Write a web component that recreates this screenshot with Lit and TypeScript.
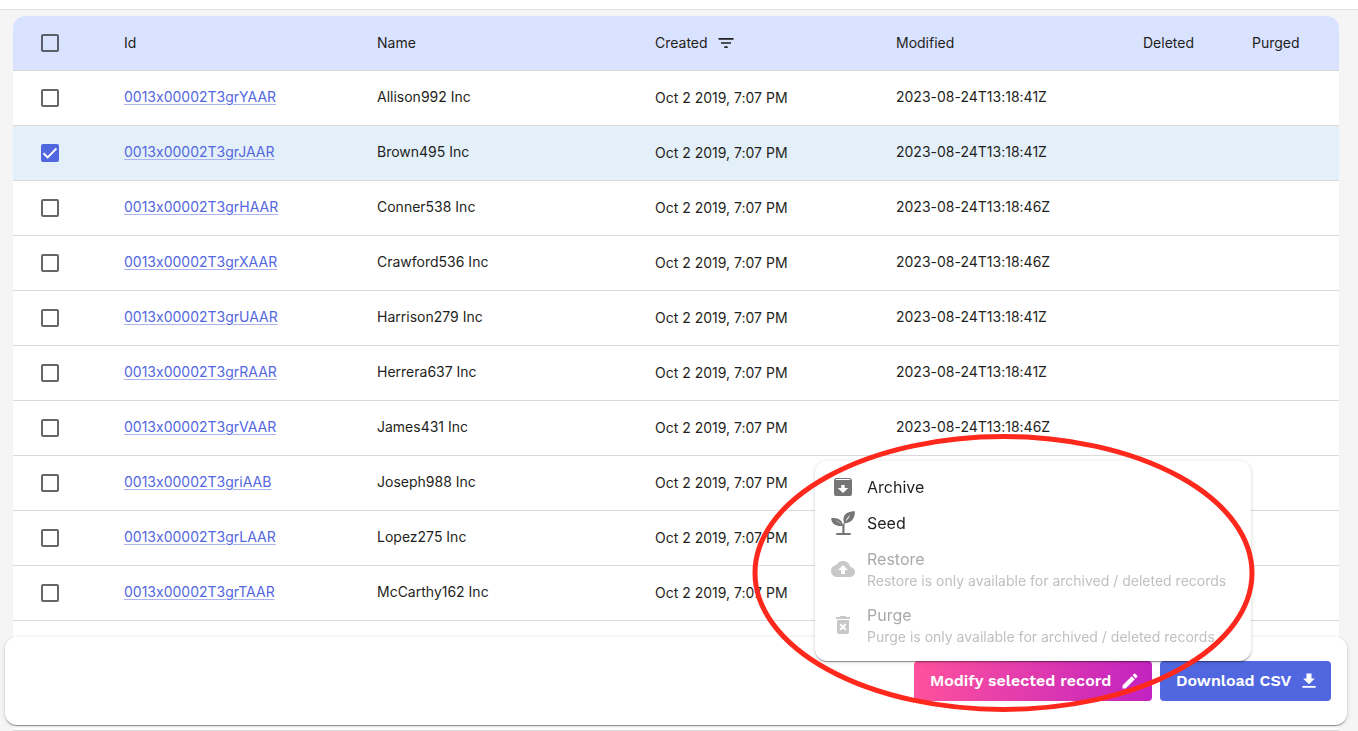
import { LitElement, html, svg, css } from "lit";
import { customElement, state } from "lit/decorators.js";

interface Account {
  id: string;
  name: string;
  created: string;
  modified: string;
}

const CREATED = "Oct 2 2019, 7:07 PM";

const ACCOUNTS: Account[] = [
  { id: "0013x00002T3grYAAR", name: "Allison992 Inc", created: CREATED, modified: "2023-08-24T13:18:41Z" },
  { id: "0013x00002T3grJAAR", name: "Brown495 Inc", created: CREATED, modified: "2023-08-24T13:18:41Z" },
  { id: "0013x00002T3grHAAR", name: "Conner538 Inc", created: CREATED, modified: "2023-08-24T13:18:46Z" },
  { id: "0013x00002T3grXAAR", name: "Crawford536 Inc", created: CREATED, modified: "2023-08-24T13:18:46Z" },
  { id: "0013x00002T3grUAAR", name: "Harrison279 Inc", created: CREATED, modified: "2023-08-24T13:18:41Z" },
  { id: "0013x00002T3grRAAR", name: "Herrera637 Inc", created: CREATED, modified: "2023-08-24T13:18:41Z" },
  { id: "0013x00002T3grVAAR", name: "James431 Inc", created: CREATED, modified: "2023-08-24T13:18:46Z" },
  { id: "0013x00002T3griAAB", name: "Joseph988 Inc", created: CREATED, modified: "" },
  { id: "0013x00002T3grLAAR", name: "Lopez275 Inc", created: CREATED, modified: "" },
  { id: "0013x00002T3grTAAR", name: "McCarthy162 Inc", created: CREATED, modified: "" },
];

const icon = (shape: unknown) =>
  html`<svg class="icon" viewBox="0 0 24 24" fill="currentColor" aria-hidden="true">${shape}</svg>`;

const ICONS = {
  archive: svg`<path fill-rule="evenodd" d="M5.2 3h13.6c.5 0 .9.2 1.2.6l.7.9c.2.3.3.6.3 1V19a2 2 0 0 1-2 2H5a2 2 0 0 1-2-2V5.500c0-.4.1-.7.3-1l.7-.9c.3-.4.700-.6 1.200-.6zM5.100 4.100 4.500 5h15l-.6-.9zM10.300 10v3H6.700l5.300 5 5.300-5h-3.600v-3z"/>`,
  seed: svg`
    <path fill-rule="evenodd" d="M.1 7.200C4 6.600 8.300 7.500 10.200 10c1 1.300 1.500 3 1.300 4.900C6 15.600.4 13.200.1 7.200zM4.300 9.400c2.400.8 4.700 2.400 6.300 4.600C9.400 11.500 7.200 9.800 4.300 9.400z"/>
    <path fill-rule="evenodd" d="M23.900.2C18.500.100 13.400 2 12.500 7.200c-.3 1.800.1 3.600 1 5C20 11.900 24.200 7.600 23.900.2zM19.300 4.300c-2.300 1.600-4 3.700-4.900 6.300 1.900-1.500 3.600-3.700 4.900-6.300z"/>
    <path d="M11.300 23V14.600c-.4-1.600-1.200-2.700-2.400-3.600 1.700.7 2.800 1.600 3.400 2.800.3-2 1.100-3.700 2.500-5-.8 1.900-1.300 3.700-1.300 5.600V23z"/>
    <rect x="5" y="22" width="15" height="2" rx="1"/>`,
  restore: svg`<path d="M19.350 10.040C18.670 6.590 15.640 4 12 4 9.110 4 6.600 5.640 5.350 8.040 2.340 8.360 0 10.910 0 14c0 3.310 2.690 6 6 6h13c2.760 0 5-2.240 5-5 0-2.640-2.050-4.780-4.650-4.960zM14 13v4h-4v-4H7l5-5 5 5h-3z"/>`,
  purge: svg`<path d="M6 19c0 1.100.9 2 2 2h8c1.100 0 2-.9 2-2V7H6v12zm2.460-7.120 1.410-1.410L12 12.590l2.120-2.120 1.410 1.410L13.410 14l2.120 2.120-1.410 1.410L12 15.410l-2.120 2.120-1.410-1.410L10.590 14l-2.130-2.120zM15.500 4l-1-1h-5l-1 1H5v2h14V4z"/>`,
  edit: svg`<path d="M3 17.250V21h3.750L17.810 9.940l-3.750-3.750L3 17.250zM20.710 7.040a1 1 0 0 0 0-1.410l-2.340-2.340a1 1 0 0 0-1.410 0l-1.830 1.830 3.750 3.750 1.830-1.830z"/>`,
  download: svg`<path d="M19 9h-4V3H9v6H5l7 7 7-7zM4 18v2h16v-2H4z"/>`,
  sort: svg`<path d="M10 18h4v-2h-4v2zM3 6v2h18V6H3zm3 7h12v-2H6v2z"/>`,
};

const MENU = [
  { icon: ICONS.archive, label: "Archive", hint: "" },
  { icon: ICONS.seed, label: "Seed", hint: "" },
  { icon: ICONS.restore, label: "Restore", hint: "Restore is only available for archived / deleted records" },
  { icon: ICONS.purge, label: "Purge", hint: "Purge is only available for archived / deleted records" },
];

@customElement("app-root")
export class AppRoot extends LitElement {
  @state() private selected = new Set<string>(["0013x00002T3grJAAR"]);

  static styles = css`
    :host {
      display: block;
      box-sizing: border-box;
      height: 100vh;
      overflow: hidden;
      background: #f5f5f5;
      color: #1f1f21;
      font-family: Inter, "Liberation Sans", sans-serif;
      font-size: 14px;
      line-height: 20px;
      font-feature-settings: "calt" 0;
    }
    *, *::before, *::after { box-sizing: border-box; }
    .topbar {
      height: 10px;
      background: #fff;
      border-bottom: 1px solid #dedede;
    }
    .page { padding: 6px 19px 0 13px; }
    .records {
      width: 100%;
      table-layout: fixed;
      border-collapse: separate;
      border-spacing: 0;
      background: #fff;
      border-radius: 12px 12px 0 0;
      overflow: hidden;
    }
    .c-check { width: 95px; }
    .c-id { width: 253px; }
    .c-name { width: 278px; }
    .c-created { width: 241px; }
    .c-modified { width: 247px; }
    .c-deleted { width: 109px; }
    .c-purged { width: 103px; }
    th, td {
      height: 55px;
      padding: 0 16px;
      border-bottom: 1px solid #dadada;
      text-align: left;
      font-weight: 400;
      white-space: nowrap;
      vertical-align: middle;
    }
    td { padding-bottom: 2px; }
    td.created { padding-bottom: 0; }
    th.check, td.check { padding: 0 0 0 28px; }
    th { background: #d9e2ff; }
    .chosen { background: #e4f0f9; }
    .sortable { display: flex; align-items: center; gap: 8px; }
    .sortable .icon { width: 20px; height: 20px; }
    a {
      color: #5367df;
      text-decoration: underline;
      text-decoration-color: #aab4f0;
      text-decoration-thickness: 1px;
      text-underline-offset: 2px;
    }
    .box {
      appearance: none;
      display: block;
      width: 18px;
      height: 18px;
      margin: 0;
      border: 2px solid #666;
      border-radius: 2px;
    }
    th .box { border-color: #5a5e6a; }
    .box:checked {
      border-color: #5067df;
      background: #5067df url("data:image/svg+xml,%3Csvg xmlns='http://www.w3.org/2000/svg' viewBox='0 0 18 18'%3E%3Cpath d='M2.500 9.300 6.700 13.400 15.400 4.500' fill='none' stroke='white' stroke-width='2'/%3E%3C/svg%3E") center / 18px 18px border-box;
    }
    .icon { display: block; width: 24px; height: 24px; flex: none; }

    .actions {
      position: fixed;
      left: 5px;
      right: 11px;
      bottom: 6px;
      display: flex;
      justify-content: flex-end;
      gap: 8px;
      padding: 24px 16px;
      background: #fff;
      border-radius: 12px;
    }
    .actions, .menu {
      box-shadow:
        0 2px 1px -1px rgba(0, 0, 0, 0.25),
        0 1px 1px rgba(0, 0, 0, 0.2),
        0 1px 4px rgba(0, 0, 0, 0.16);
    }
    .anchor { position: relative; }
    .btn {
      display: flex;
      align-items: center;
      justify-content: space-between;
      height: 40px;
      padding: 0 12px 0 16px;
      border: 0;
      border-radius: 4px;
      color: #fff;
      font: 600 16px/20px "Work Sans", Inter, sans-serif;
      white-space: nowrap;
    }
    .btn .icon { width: 20px; height: 20px; }
    .modify { width: 238px; background: linear-gradient(100deg, #ff529c, #c122c1); }
    .download { width: 171px; background: #5067df; }

    .menu {
      position: absolute;
      bottom: 100%;
      left: 50%;
      width: 436px;
      transform: translateX(-50%);
      padding: 8px 0;
      background: #fff;
      border-radius: 12px;
    }
    .item {
      display: flex;
      align-items: center;
      gap: 12px;
      width: 100%;
      padding: 6px 16px;
      border: 0;
      background: none;
      color: #1f1f21;
      font: 400 16px/24px Inter, "Liberation Sans", sans-serif;
      text-align: left;
    }
    .item .icon { color: #757575; }
    .item:disabled { color: #a9a9a9; }
    .item:disabled .icon { color: #c8c8c8; }
    .label, .hint { display: block; }
    .hint {
      color: #c0c0c0;
      font-size: 14px;
      line-height: 20px;
      white-space: nowrap;
    }
    .ring {
      position: absolute;
      left: -162px;
      bottom: -11px;
      width: 503px;
      height: 278px;
      pointer-events: none;
    }
  `;

  private toggle(id: string) {
    const next = new Set(this.selected);
    next.has(id) ? next.delete(id) : next.add(id);
    this.selected = next;
  }

  private row(a: Account) {
    const on = this.selected.has(a.id);
    return html`<tr class=${on ? "chosen" : ""}>
      <td class="check"><input class="box" type="checkbox" aria-label=${a.name} .checked=${on} @change=${() => this.toggle(a.id)} /></td>
      <td><a href="#${a.id}">${a.id}</a></td>
      <td>${a.name}</td>
      <td class="created">${a.created}</td>
      <td>${a.modified}</td>
      <td></td>
      <td></td>
    </tr>`;
  }

  render() {
    return html`
      <header class="topbar"></header>
      <main class="page">
        <table class="records">
          <colgroup>
            <col class="c-check" /><col class="c-id" /><col class="c-name" /><col class="c-created" />
            <col class="c-modified" /><col class="c-deleted" /><col class="c-purged" />
          </colgroup>
          <thead>
            <tr>
              <th class="check"><input class="box" type="checkbox" aria-label="All" /></th>
              <th>Id</th>
              <th>Name</th>
              <th><span class="sortable">Created ${icon(ICONS.sort)}</span></th>
              <th>Modified</th>
              <th>Deleted</th>
              <th>Purged</th>
            </tr>
          </thead>
          <tbody>
            ${ACCOUNTS.map((a) => this.row(a))}
            <tr><td colspan="7"></td></tr>
            <tr><td colspan="7"></td></tr>
          </tbody>
        </table>
      </main>
      <footer class="actions">
        <div class="anchor">
          <button class="btn modify">Modify selected record ${icon(ICONS.edit)}</button>
          <div class="menu" role="menu">
            ${MENU.map(
              (m) => html`<button class="item" role="menuitem" ?disabled=${m.hint !== ""}>
                ${icon(m.icon)}
                <span>
                  <span class="label">${m.label}</span>
                  ${m.hint ? html`<span class="hint">${m.hint}</span>` : ""}
                </span>
              </button>`
            )}
          </div>
          <svg class="ring" viewBox="0 0 503 278" aria-hidden="true">
            <ellipse cx="251.5" cy="139" rx="248.5" ry="136.5" fill="none" stroke="#ff281c" stroke-width="5" />
          </svg>
        </div>
        <button class="btn download">Download CSV ${icon(ICONS.download)}</button>
      </footer>
    `;
  }
}
